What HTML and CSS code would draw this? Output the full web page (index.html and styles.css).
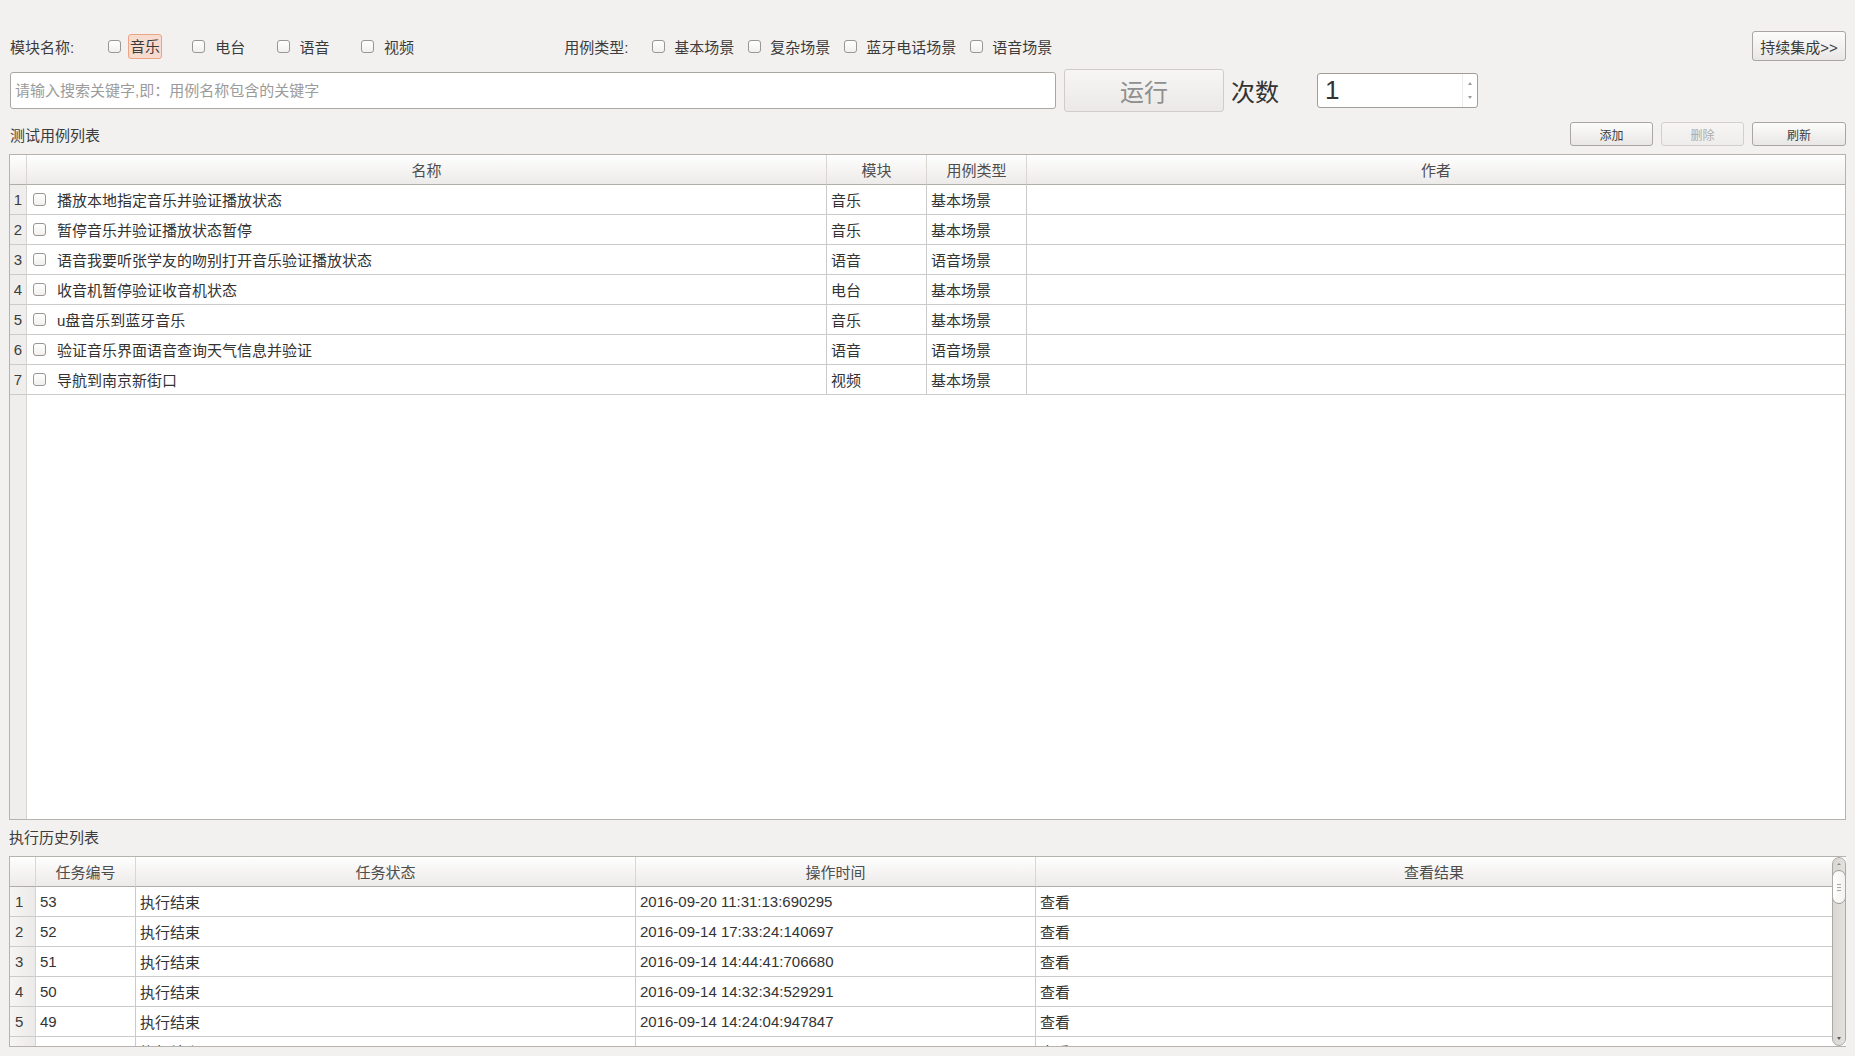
FILE: index.html
```html
<!DOCTYPE html>
<html lang="zh-CN">
<head>
<meta charset="utf-8">
<title>测试用例</title>
<link rel="stylesheet" href="styles.css">
</head>
<body>
<div class="app">
  <div class="filters">
    <span class="lbl-mod">模块名称:</span>
    <label class="mod-item"><span class="cb"></span><span class="hl">音乐</span></label>
    <label class="mod-item"><span class="cb"></span><span class="txt">电台</span></label>
    <label class="mod-item"><span class="cb"></span><span class="txt">语音</span></label>
    <label class="mod-item"><span class="cb"></span><span class="txt">视频</span></label>
    <span class="lbl-type">用例类型:</span>
    <label class="type-item"><span class="cb"></span><span class="txt">基本场景</span></label>
    <label class="type-item"><span class="cb"></span><span class="txt">复杂场景</span></label>
    <label class="type-item"><span class="cb"></span><span class="txt">蓝牙电话场景</span></label>
    <label class="type-item"><span class="cb"></span><span class="txt">语音场景</span></label>
    <button class="btn ci">持续集成&gt;&gt;</button>
  </div>

  <div class="runrow">
    <input class="search" type="text" placeholder="请输入搜索关键字,即：用例名称包含的关键字">
    <button class="run">运行</button>
    <span class="times">次数</span>
    <div class="spin">
      <span class="spin-val">1</span>
      <div class="spin-arrows"><span class="arr up"></span><span class="arr down"></span></div>
    </div>
  </div>

  <div class="listbar">
    <span class="sec-lbl">测试用例列表</span>
    <div class="actions">
      <button class="btn small">添加</button>
      <button class="btn small disabled">删除</button>
      <button class="btn small wide">刷新</button>
    </div>
  </div>

  <div class="tbl t1">
    <div class="thead">
      <div class="th rn"></div>
      <div class="th">名称</div>
      <div class="th">模块</div>
      <div class="th">用例类型</div>
      <div class="th last">作者</div>
    </div>
    <div class="tbody">
      <div class="tr"><div class="td rn">1</div><div class="td name"><span class="cb"></span>播放本地指定音乐并验证播放状态</div><div class="td">音乐</div><div class="td">基本场景</div><div class="td last"></div></div>
      <div class="tr"><div class="td rn">2</div><div class="td name"><span class="cb"></span>暂停音乐并验证播放状态暂停</div><div class="td">音乐</div><div class="td">基本场景</div><div class="td last"></div></div>
      <div class="tr"><div class="td rn">3</div><div class="td name"><span class="cb"></span>语音我要听张学友的吻别打开音乐验证播放状态</div><div class="td">语音</div><div class="td">语音场景</div><div class="td last"></div></div>
      <div class="tr"><div class="td rn">4</div><div class="td name"><span class="cb"></span>收音机暂停验证收音机状态</div><div class="td">电台</div><div class="td">基本场景</div><div class="td last"></div></div>
      <div class="tr"><div class="td rn">5</div><div class="td name"><span class="cb"></span>u盘音乐到蓝牙音乐</div><div class="td">音乐</div><div class="td">基本场景</div><div class="td last"></div></div>
      <div class="tr"><div class="td rn">6</div><div class="td name"><span class="cb"></span>验证音乐界面语音查询天气信息并验证</div><div class="td">语音</div><div class="td">语音场景</div><div class="td last"></div></div>
      <div class="tr"><div class="td rn">7</div><div class="td name"><span class="cb"></span>导航到南京新街口</div><div class="td">视频</div><div class="td">基本场景</div><div class="td last"></div></div>
    </div>
  </div>

  <div class="sec-lbl hist">执行历史列表</div>

  <div class="tbl t2">
    <div class="t2-main">
      <div class="thead">
        <div class="th rn"></div>
        <div class="th">任务编号</div>
        <div class="th">任务状态</div>
        <div class="th">操作时间</div>
        <div class="th last">查看结果</div>
      </div>
      <div class="tbody">
        <div class="tr"><div class="td rn">1</div><div class="td">53</div><div class="td">执行结束</div><div class="td">2016-09-20 11:31:13:690295</div><div class="td last">查看</div></div>
        <div class="tr"><div class="td rn">2</div><div class="td">52</div><div class="td">执行结束</div><div class="td">2016-09-14 17:33:24:140697</div><div class="td last">查看</div></div>
        <div class="tr"><div class="td rn">3</div><div class="td">51</div><div class="td">执行结束</div><div class="td">2016-09-14 14:44:41:706680</div><div class="td last">查看</div></div>
        <div class="tr"><div class="td rn">4</div><div class="td">50</div><div class="td">执行结束</div><div class="td">2016-09-14 14:32:34:529291</div><div class="td last">查看</div></div>
        <div class="tr"><div class="td rn">5</div><div class="td">49</div><div class="td">执行结束</div><div class="td">2016-09-14 14:24:04:947847</div><div class="td last">查看</div></div>
        <div class="tr"><div class="td rn">6</div><div class="td">48</div><div class="td">执行结束</div><div class="td">2016-09-14 14:20:11:301822</div><div class="td last">查看</div></div>
      </div>
    </div>
    <div class="sb">
      <span class="sb-arr up"></span>
      <div class="sb-thumb"><i></i><i></i><i></i></div>
      <div class="sb-fill"></div>
      <span class="sb-arr down"></span>
    </div>
  </div>
</div>
</body>
</html>
```

FILE: styles.css
```css
* { box-sizing: border-box; }
html, body { margin: 0; padding: 0; }
body {
  width: 1855px;
  height: 1056px;
  overflow: hidden;
  background: #f2f1f0;
  color: #3c3c3c;
  font-family: "Liberation Sans", "Noto Sans CJK SC", sans-serif;
  font-size: 15px;
}
button, input { font-family: "Liberation Sans", "Noto Sans CJK SC", sans-serif; }

.app {
  display: flex;
  flex-direction: column;
  padding: 31px 9px 0 9px;
}

/* ---------- filter row ---------- */
.filters {
  display: flex;
  align-items: center;
  height: 30px;
  font-size: 15px;
}
.lbl-mod { width: 99px; padding-left: 1px; white-space: nowrap; }
.mod-item {
  width: 84.3px;
  display: flex;
  align-items: center;
  flex: none;
}
.mod-item .txt { margin-left: 10px; white-space: nowrap; }
.hl {
  margin-left: 7px;
  height: 25px;
  line-height: 23px;
  padding: 0 1px;
  border: 1px solid #eaa486;
  background: #f8dbcf;
  border-radius: 3px;
  white-space: nowrap;
}
.lbl-type { margin-left: 119px; width: 88px; white-space: nowrap; flex: none; }
.type-item {
  display: flex;
  align-items: center;
  margin-right: 14px;
  flex: none;
}
.type-item .txt { margin-left: 9px; white-space: nowrap; }

.cb {
  display: inline-block;
  width: 13px;
  height: 13px;
  flex: none;
  border: 1px solid #9a9693;
  border-radius: 3px;
  background: linear-gradient(#ffffff, #f1f0ef);
}

.btn {
  border: 1px solid #a9a5a0;
  border-radius: 3px;
  background: linear-gradient(#fcfcfb, #e9e7e5);
  color: #3c3c3c;
  padding: 0;
  cursor: default;
}
.ci {
  margin-left: auto;
  width: 94px;
  height: 30px;
  font-size: 15px;
  white-space: nowrap;
}

/* ---------- run row ---------- */
.runrow {
  display: flex;
  align-items: center;
  height: 43px;
  margin-top: 8px;
}
.search {
  margin: 0 0 0 1px;
  width: 1046px;
  height: 37px;
  border: 1px solid #aaa6a2;
  border-radius: 3px;
  background: #fff;
  padding: 0 4px;
  font-size: 15px;
  color: #3c3c3c;
  outline: none;
}
.search::placeholder { color: #9b9b9b; }
.run {
  margin-left: 8px;
  width: 160px;
  height: 43px;
  border: 1px solid #d0cdc9;
  border-radius: 3px;
  background: linear-gradient(#f7f6f5, #ebe9e7);
  color: #8f8f8f;
  font-size: 24px;
  padding: 0;
}
.times { margin-left: 7px; font-size: 24px; color: #333; white-space: nowrap; }
.spin {
  margin-left: 38px;
  width: 161px;
  height: 35px;
  border: 1px solid #a19d99;
  border-radius: 3px;
  background: #fff;
  display: flex;
  align-items: stretch;
}
.spin-val {
  flex: 1;
  display: flex;
  align-items: center;
  padding-left: 7px;
  font-size: 26px;
  color: #333;
}
.spin-arrows {
  width: 15px;
  border-left: 1px solid #ecebea;
  display: flex;
  flex-direction: column;
  justify-content: space-between;
  align-items: center;
  padding: 8px 0;
}
.arr { width: 0; height: 0; border-left: 2px solid transparent; border-right: 2px solid transparent; }
.arr.up { border-bottom: 3px solid #9a9a9a; }
.arr.down { border-top: 3px solid #9a9a9a; }

/* ---------- list bar ---------- */
.listbar {
  display: flex;
  align-items: center;
  height: 24px;
  margin-top: 10px;
}
.sec-lbl { font-size: 15px; padding-left: 1px; white-space: nowrap; }
.actions { margin-left: auto; display: flex; gap: 8px; }
.btn.small { width: 83px; height: 24px; font-size: 12px; }
.btn.small.wide { width: 94px; }
.btn.small.disabled { color: #ababab; border-color: #d3d0cc; background: linear-gradient(#f6f5f4, #eeedeb); }

/* ---------- tables ---------- */
.tbl {
  border: 1px solid #b6b2ae;
  background: #fff;
  overflow: hidden;
}
.t1 { margin-top: 8px; height: 666px; display: flex; flex-direction: column; }
.t1 .thead, .t1 .tr {
  display: grid;
  grid-template-columns: 17px 800px 100px 100px 1fr;
}
.t1 .tbody {
  flex: 1;
  background: linear-gradient(to right, #efeeec 0, #efeeec 16px, #d6d4d1 16px, #d6d4d1 17px, #ffffff 17px);
}
.th {
  height: 30px;
  border-bottom: 1px solid #b0aca8;
  border-right: 1px solid #dad7d3;
  background: linear-gradient(#fefefe, #edebe9);
  display: flex;
  align-items: center;
  justify-content: center;
  font-size: 15px;
  color: #4d4d4d;
  white-space: nowrap;
}
.th.last { border-right: none; }
.td {
  height: 30px;
  border-bottom: 1px solid #cdcbc9;
  border-right: 1px solid #cdcbc9;
  display: flex;
  align-items: center;
  padding-left: 4px;
  font-size: 15px;
  color: #333;
  white-space: nowrap;
  overflow: hidden;
  background: #fff;
}
.td.last { border-right: none; }
.td.rn {
  background: #efeeec;
  justify-content: center;
  padding: 0;
  color: #3c3c3c;
  border-right-color: #d6d4d1;
}
.td.name { padding-left: 6px; }
.td.name .cb { margin-right: 11px; }

.sec-lbl.hist {
  height: 36px;
  line-height: 36px;
  padding-left: 0;
}

.t2 {
  height: 191px;
  display: flex;
  border-right: none;
}
.t2-main { flex: 1; overflow: hidden; }
.t2 .thead, .t2 .tr {
  display: grid;
  grid-template-columns: 26px 100px 500px 400px 1fr;
}
.t2 .td.rn {
  justify-content: flex-start;
  padding-left: 5px;
  background: linear-gradient(to right, #f6f5f4, #ebeae8);
}

/* scrollbar */
.sb {
  width: 14px;
  flex: none;
  border: 1px solid #aca8a4;
  border-radius: 7px;
  background: linear-gradient(to right, #d9d7d4, #e4e2df);
  display: flex;
  flex-direction: column;
  align-items: center;
  overflow: hidden;
}
.sb-arr { flex: none; width: 0; height: 0; border-left: 2px solid transparent; border-right: 2px solid transparent; }
.sb-arr.up { border-bottom: 2px solid #8a8a8a; margin-top: 5px; margin-bottom: 5px; }
.sb-arr.down { border-top: 3px solid #5a5a5a; margin-top: 4px; margin-bottom: 5px; }
.sb-thumb {
  flex: none;
  width: 14px;
  height: 34px;
  border: 1px solid #9f9b97;
  border-radius: 7px;
  background: linear-gradient(to right, #ffffff, #f3f2f1);
  display: flex;
  flex-direction: column;
  align-items: center;
  justify-content: center;
  gap: 2px;
}
.sb-thumb i { display: block; width: 4px; height: 1px; background: #a9a6a2; }
.sb-fill { flex: 1; }
```
